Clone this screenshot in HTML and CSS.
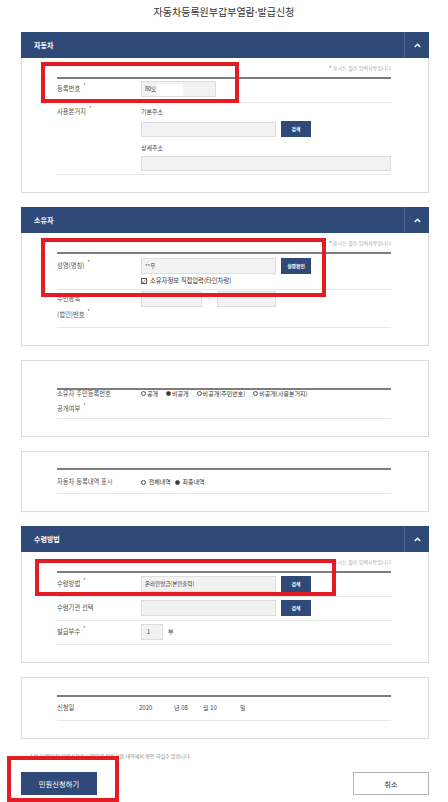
FILE: index.html
```html
<!DOCTYPE html>
<html lang="ko">
<head>
  <meta charset="UTF-8" />
  <title>자동차등록원부갑부열람·발급신청</title>
  <link rel="stylesheet" href="styles.css">
</head>
<body>
  <h1 class="page-title">자동차등록원부갑부열람·발급신청</h1>

  <!-- 자동차 -->
  <div class="panel">
    <div class="panel-head">
      <h2>자동차</h2>
      <span class="toggle"><svg width="7" height="5" viewBox="0 0 7 5"><polyline points="0.8,4 3.5,1.2 6.2,4" fill="none" stroke="#fff" stroke-width="1.4"/></svg></span>
    </div>
    <div class="panel-body">
      <p class="req-note"><span class="star">*</span> 표시는 필수 입력사항입니다</p>
      <div class="form">
        <div class="row row-reg">
          <div class="label">등록번호<span class="req">*</span></div>
          <div class="field">
            <span class="input w-reg">80오<span class="mask"></span></span>
          </div>
        </div>
        <div class="row row-addr">
          <div class="label">사용본거지<span class="req">*</span></div>
          <div class="field addr">
            <div class="sub">기본주소</div>
            <div class="line gap-top-4"><span class="input w-long h15"></span><span class="btn-sm h15">검색</span></div>
            <div class="sub gap-top-6">상세주소</div>
            <div class="line gap-top-3"><span class="input w-full h15"></span></div>
          </div>
        </div>
      </div>
    </div>
  </div>

  <!-- 소유자 -->
  <div class="panel">
    <div class="panel-head">
      <h2>소유자</h2>
      <span class="toggle"><svg width="7" height="5" viewBox="0 0 7 5"><polyline points="0.8,4 3.5,1.2 6.2,4" fill="none" stroke="#fff" stroke-width="1.4"/></svg></span>
    </div>
    <div class="panel-body">
      <p class="req-note"><span class="star">*</span> 표시는 필수 입력사항입니다</p>
      <div class="form">
        <div class="row row-name">
          <div class="label">성명(명칭)<span class="req">*</span></div>
          <div class="field">
            <div class="line"><span class="input w-long">**우</span><span class="btn-sm">실명확인</span></div>
            <div class="check"><span class="box">&#10003;</span>소유자정보 직접입력(타인차량)</div>
          </div>
        </div>
        <div class="row row-rrn">
          <div class="label">주민등록<br>(법인)번호<span class="req">*</span></div>
          <div class="field">
            <div class="line"><span class="input w-half1"></span><span class="dash">-</span><span class="input w-half2"></span></div>
          </div>
        </div>
      </div>
    </div>
  </div>

  <!-- 공개여부 -->
  <div class="panel">
    <div class="panel-body pt-27">
      <div class="form">
        <div class="row row-open">
          <div class="label">소유자 주민등록번호<br>공개여부<span class="req">*</span></div>
          <div class="field radios">
            <span class="opt"><i class="radio"></i>공개</span>
            <span class="opt"><i class="radio on"></i>비공개</span>
            <span class="opt"><i class="radio"></i>비공개(주민번호)</span>
            <span class="opt"><i class="radio"></i>비공개(사용본거지)</span>
          </div>
        </div>
      </div>
    </div>
  </div>

  <!-- 등록내역 표시 -->
  <div class="panel">
    <div class="panel-body pt-16">
      <div class="form">
        <div class="row row-text">
          <div class="label">자동차 등록내역 표시</div>
          <div class="field radios tight">
            <span class="opt"><i class="radio"></i>&nbsp;전체내역</span>
            <span class="opt"><i class="radio on"></i>&nbsp;최종내역</span>
          </div>
        </div>
      </div>
    </div>
  </div>

  <!-- 수령방법 -->
  <div class="panel">
    <div class="panel-head">
      <h2>수령방법</h2>
      <span class="toggle"><svg width="7" height="5" viewBox="0 0 7 5"><polyline points="0.8,4 3.5,1.2 6.2,4" fill="none" stroke="#fff" stroke-width="1.4"/></svg></span>
    </div>
    <div class="panel-body">
      <p class="req-note"><span class="star">*</span> 표시는 필수 입력사항입니다</p>
      <div class="form">
        <div class="row">
          <div class="label">수령방법<span class="req">*</span></div>
          <div class="field line"><span class="input w-long">온라인발급(본인출력)</span><span class="btn-sm">검색</span></div>
        </div>
        <div class="row">
          <div class="label">수령기관 선택</div>
          <div class="field line"><span class="input w-long"></span><span class="btn-sm">검색</span></div>
        </div>
        <div class="row">
          <div class="label">발급부수<span class="req">*</span></div>
          <div class="field line"><span class="input w-num">1</span><span class="unit">부</span></div>
        </div>
      </div>
    </div>
  </div>

  <!-- 신청일 -->
  <div class="panel last">
    <div class="panel-body pt-17">
      <div class="form">
        <div class="row">
          <div class="label">신청일</div>
          <div class="field date">
            <span class="d-year">2020</span>
            <span class="d-month">년 08</span>
            <span class="d-day">월 10</span>
            <span>일</span>
          </div>
        </div>
      </div>
    </div>
  </div>

  <p class="foot-note">* 발급(열람)된 민원신청은 나의민원 민원신청 내역에서 확인 하실수 있습니다.</p>

  <div class="actions">
    <button class="btn-primary">민원신청하기</button>
    <button class="btn-cancel">취소</button>
  </div>

  <!-- 강조 표시 -->
  <div class="mark mark-1"></div>
  <div class="mark mark-2"></div>
  <div class="mark mark-3"></div>
  <div class="mark mark-4"></div>
</body>
</html>
```

FILE: styles.css
```css
* {
  box-sizing: border-box;
}

body {
  margin: 0;
  width: 448px;
  height: 802px;
  overflow: hidden;
  position: relative;
  background-color: #fff;
  font-family: "Noto Sans CJK KR", "Noto Sans", sans-serif;
  color: #555;
}

.page-title {
  margin: 0;
  height: 32px;
  padding-top: 5px;
  font-size: 10px;
  line-height: 14px;
  font-weight: normal;
  text-align: center;
  color: #333;
}

.panel {
  margin: 0 19px 14px 21px;
  border: 1px solid #dcdcdc;
}

.panel.last {
  margin-bottom: 0;
}

.panel-head {
  margin: -1px -1px 0;
  height: 26px;
  background-color: #2f4a79;
  display: flex;
  align-items: center;
}

.panel-head h2 {
  flex: 1;
  margin: 0;
  padding-left: 13px;
  font-size: 7px;
  line-height: 26px;
  font-weight: bold;
  color: #fff;
}

.toggle {
  width: 25px;
  height: 100%;
  border-left: 1px solid #4a6290;
  display: flex;
  align-items: center;
  justify-content: center;
}

.panel-body {
  padding: 0 37px 17px 35px;
}

.pt-27 { padding-top: 27px; }
.pt-16 { padding-top: 16px; }
.pt-17 { padding-top: 17px; }

.req-note {
  margin: 0;
  height: 19px;
  line-height: 19px;
  text-align: right;
  font-size: 5px;
  color: #a5a5a5;
}

.req-note .star {
  color: #555;
}

.form {
  border-top: 2px solid #7d7d7d;
}

.row {
  display: flex;
  padding: 3px 0 4px;
  border-bottom: 1px solid #e8e8e8;
}

.label {
  width: 84px;
  height: 16px;
  flex: none;
  font-size: 6.3px;
  line-height: 16px;
  color: #555;
}

.req {
  font-size: 5px;
  line-height: 0;
  vertical-align: 4px;
  margin-left: 3px;
}

.field {
  flex: 1;
  height: 16px;
  font-size: 6px;
  line-height: 16px;
  color: #444;
}

.line {
  display: flex;
  align-items: center;
}

.input {
  display: inline-block;
  height: 16px;
  background-color: #f2f2f2;
  border: 1px solid #dedede;
  padding: 0 3px;
  font-size: 5.5px;
  line-height: 14px;
  color: #333;
}

.mask {
  display: inline-block;
  width: 26px;
  height: 12px;
  margin-left: 1px;
  vertical-align: middle;
  background-color: #fff;
}

.h15 { height: 15px; }
.w-reg { width: 75px; }
.w-long { width: 135px; }
.w-full { width: 250px; }
.w-half1 { width: 61px; }
.w-half2 { width: 59px; }
.w-num { width: 22px; padding-left: 5px; }

.btn-sm {
  display: inline-block;
  width: 30px;
  height: 16px;
  margin-left: 5px;
  background-color: #2f4a79;
  color: #fff;
  font-size: 4.8px;
  font-weight: bold;
  line-height: 16px;
  text-align: center;
}

.btn-sm.h15 {
  line-height: 15px;
}

/* 사용본거지 */
.row-reg {
  padding: 2px 0 5px;
}

.row-addr {
  padding: 4px 0 3px;
}

.row-addr .label,
.row-addr .field {
  height: auto;
}

.row-addr .label,
.sub {
  line-height: 10px;
}

.gap-top-3 { margin-top: 3px; }
.gap-top-4 { margin-top: 4px; }
.gap-top-6 { margin-top: 6px; }

/* 소유자 */
.row-name {
  padding: 4px 0 3px;
}

.row-name .field {
  height: 28px;
}

.check {
  margin-top: 2px;
  height: 10px;
  line-height: 10px;
  font-size: 6.3px;
  color: #333;
  display: flex;
  align-items: center;
}

.check .box {
  width: 6px;
  height: 6px;
  margin-right: 3px;
  border: 1px solid #555;
  font-size: 5px;
  line-height: 4px;
  text-align: center;
  color: #222;
}

.row-rrn {
  padding: 1px 0 4px;
}

.row-rrn .label {
  height: 32px;
}

.dash {
  width: 15px;
  text-align: center;
}

/* 공개여부 */
.row-open {
  padding: 0 0 2px;
}

.row-open .label {
  height: 30px;
  margin-top: -4px;
  line-height: 15px;
}

.row-open .field {
  margin-top: -4px;
  height: 15px;
  line-height: 15px;
}

.radios {
  display: flex;
  align-items: center;
  gap: 8px;
  font-size: 6px;
  color: #333;
}

.radios.tight {
  gap: 4px;
}

.opt {
  display: flex;
  align-items: center;
}

.radio {
  display: inline-block;
  width: 5px;
  height: 5px;
  margin-right: 1px;
  border: 1px solid #555;
  border-radius: 50%;
}

.radio.on {
  border-color: #444;
  background: radial-gradient(circle, #333 0 1.4px, #fff 1.6px);
}

.row-text {
  padding: 4px 0 3px;
}

.unit {
  margin-left: 5px;
}

/* 신청일 */
.date {
  display: flex;
}

.d-year { width: 35px; margin-left: -2px; }
.d-month { width: 29px; }
.d-day { width: 37px; }

.foot-note {
  margin: 12px 0 0 30px;
  height: 10px;
  font-size: 5px;
  line-height: 10px;
  color: #888;
}

.actions {
  margin: 11px 19px 0 21px;
  display: flex;
  justify-content: space-between;
}

.actions button {
  width: 76px;
  height: 23px;
  padding: 0;
  font-family: inherit;
  font-size: 7.3px;
  cursor: pointer;
}

.btn-primary {
  border: none;
  background-color: #2f4a79;
  color: #fff;
}

.btn-cancel {
  border: 1px solid #b5b5b5;
  background-color: #fff;
  color: #333;
}

.mark {
  position: absolute;
  border: 4px solid #e41d25;
}

.mark-1 { left: 41px; top: 62px; width: 198px; height: 41px; }
.mark-2 { left: 41px; top: 238px; width: 285px; height: 59px; }
.mark-3 { left: 35px; top: 559px; width: 301px; height: 37px; }
.mark-4 { left: 7px; top: 756px; width: 112px; height: 46px; }
```
